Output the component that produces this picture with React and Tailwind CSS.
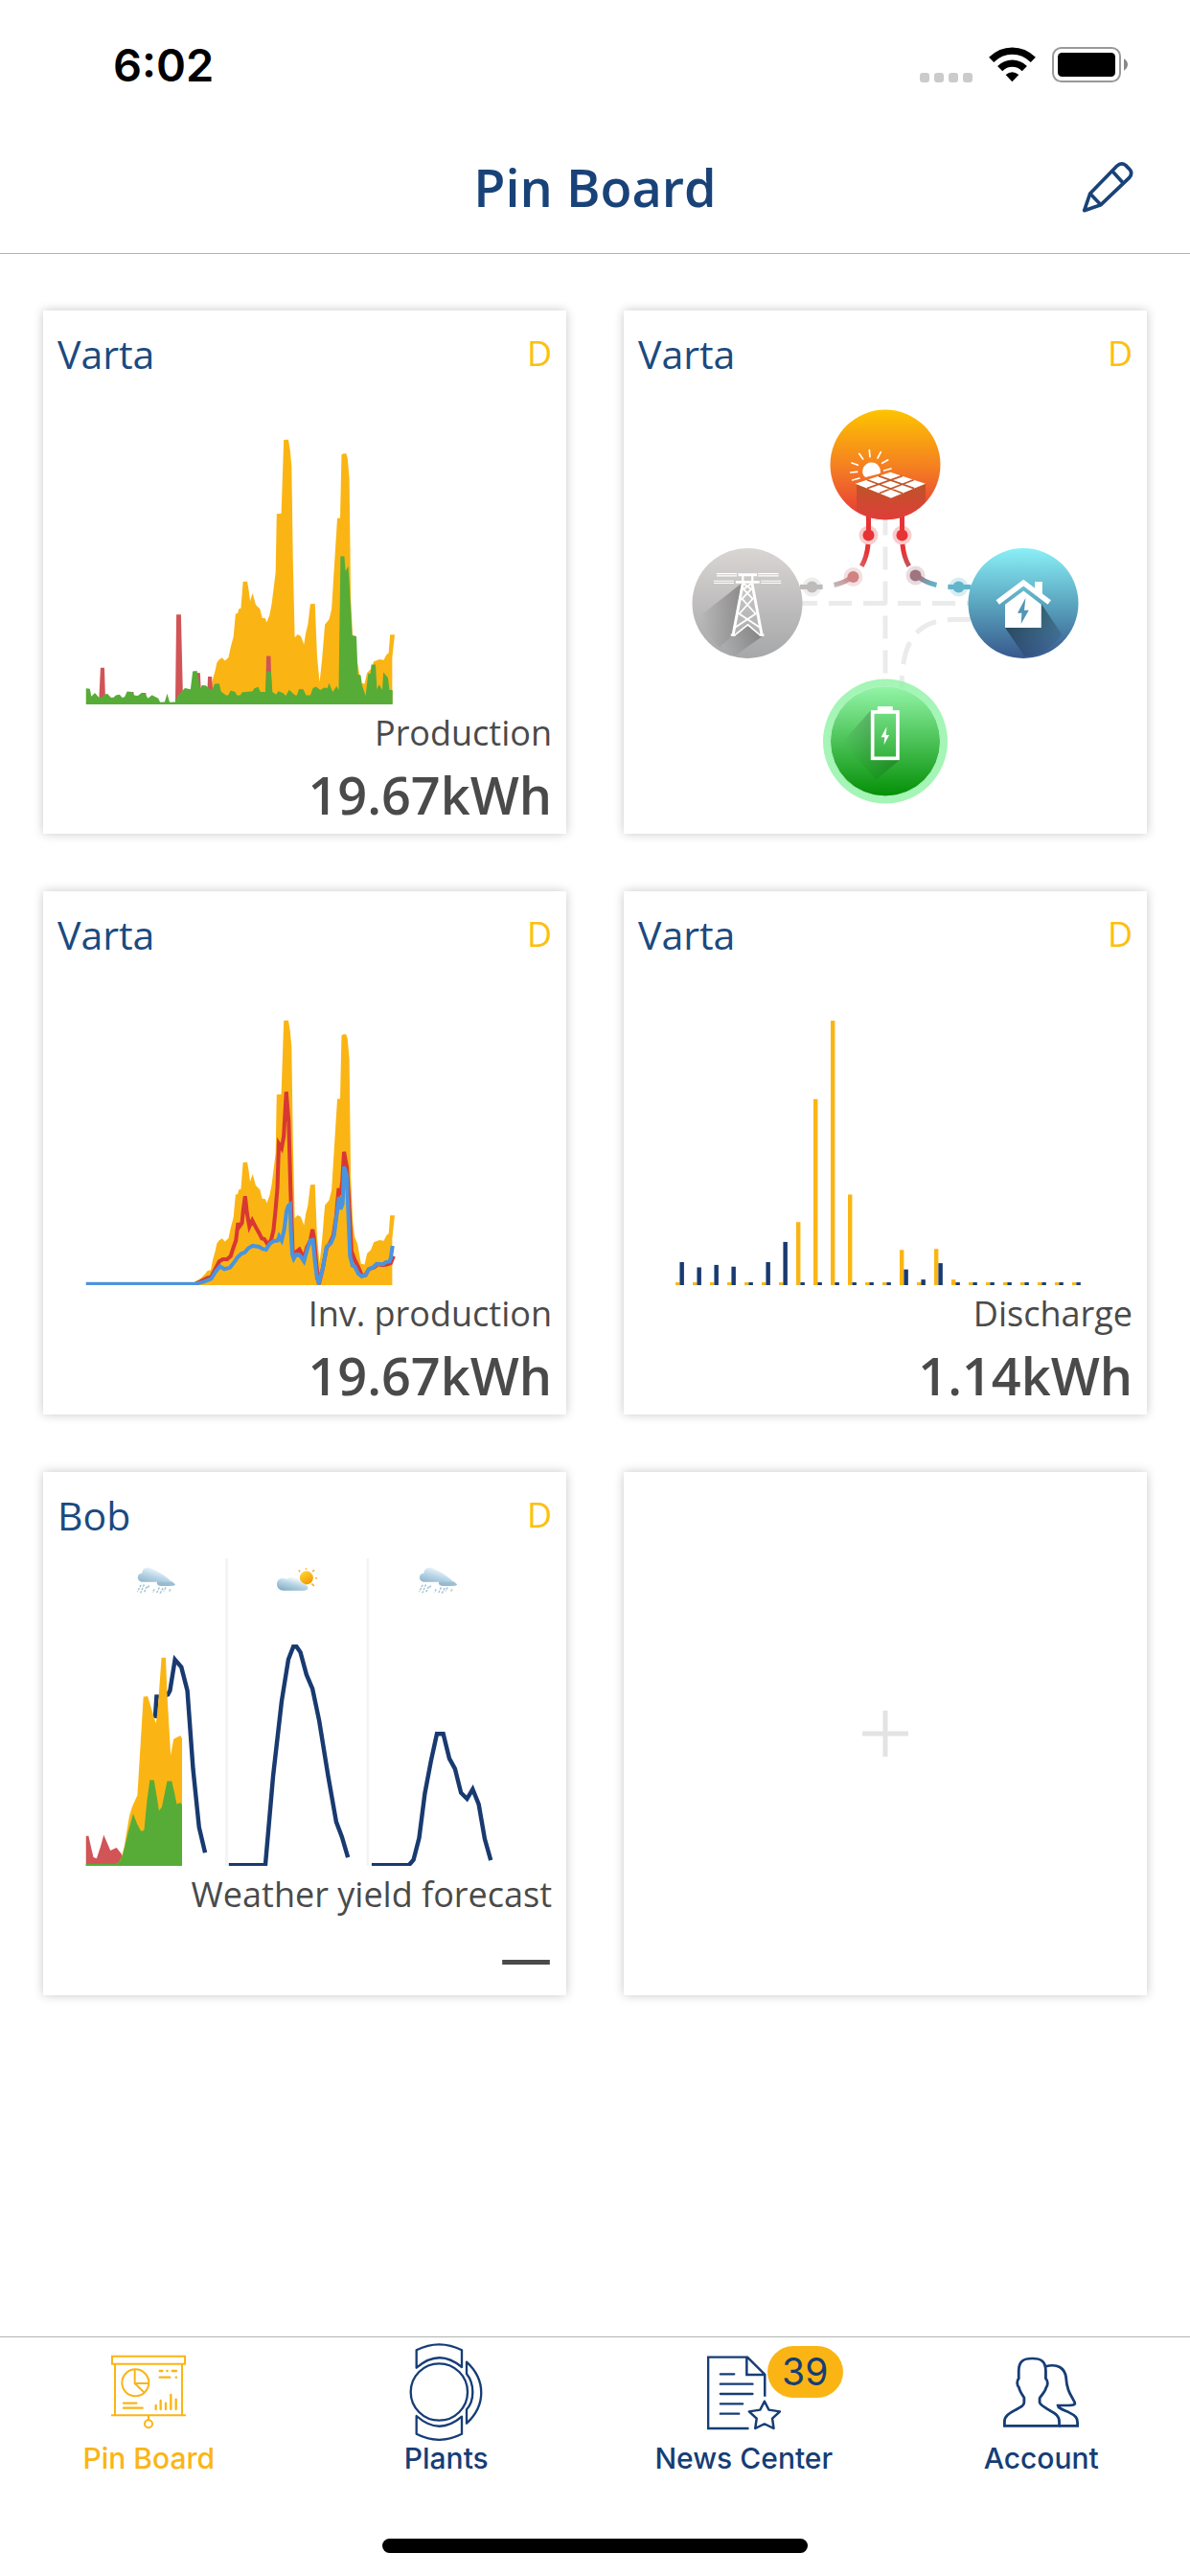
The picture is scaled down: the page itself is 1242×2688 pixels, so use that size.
const produccion = "470,1169 470,1159 485,1150 497,1138 505,1128 514,1126 520,1095 527,1070 531,1050 537,1041 546,1035 554,1044 564,1034 570,1005 578,975 584,909 590,908 593,895 599,893 605,817 617,816 621,840 625,872 632,850 641,883 653,895 659,921 668,922 672,934 680,912 686,880 697,790 700,622 713,621 720,410 733,409 738,440 742,485 746,760 751,977 759,968 768,973 777,997 782,965 788,940 795,881 808,880 814,1030 821,1106 828,1040 836,940 848,925 855,895 862,780 871,635 879,634 883,452 889,449 896,449 900,462 905,520 909,860 915,990 920,1030 928,1050 938,1108 948,1110 955,1078 966,1067 974,1046 990,1040 1002,1042 1010,1026 1016,1021 1020,969 1033,969 1026,1035 1026,1169"

const consumo = "162,1169 162,1123 173,1124 177,1146 187,1136 199,1150 207,1149 214,1140 222,1139 232,1150 240,1149 246,1143 257,1141 264,1150 271,1148 278,1132 292,1133 298,1143 308,1144 320,1135 330,1141 337,1152 348,1142 366,1152 371,1163 384,1162 391,1138 398,1163 414,1162 420,1145 434,1130 441,1122 457,1126 463,1074 475,1073 480,1100 484,1125 489,1114 499,1115 505,1119 513,1127 519,1124 525,1110 538,1109 543,1132 557,1143 563,1143 570,1129 583,1133 588,1143 597,1143 603,1134 632,1131 637,1123 648,1119 654,1133 668,1133 672,1074 684,1074 688,1133 698,1141 705,1131 717,1136 726,1144 735,1127 752,1143 757,1143 763,1125 775,1126 783,1143 795,1143 802,1123 811,1118 823,1128 834,1121 843,1122 848,1108 858,1133 869,1117 875,1128 880,744 891,744 894,786 902,773 905,820 913,970 925,974 929,1083 937,1085 941,1115 951,1144 958,1082 965,1080 967,1055 979,1055 983,1125 989,1112 998,1127 1001,1077 1014,1093 1018,1127 1027,1128 1027,1169"

const inversor1 = "470,1155 485,1148 505,1137 515,1135 525,1115 538,1090 548,1084 560,1084 570,1075 578,1050 585,1030 591,980 595,990 602,980 606,940 611,903 616,950 623,990 631,972 640,990 650,1008 658,1024 665,1026 674,1040 684,1030 691,1000 697,940 702,880 706,752 714,765 720,730 727,603 734,690 739,880 745,1060 752,1065 764,1055 777,1080 785,1050 795,1030 801,998 805,1020 812,1100 819,1155 830,1110 841,1050 850,1038 860,1015 868,960 875,880 880,900 885,860 890,775 898,820 903,900 911,1060 920,1085 930,1105 940,1130 950,1130 960,1112 975,1107 985,1098 1000,1101 1015,1098 1022,1095 1030,1075"

const inversor2 = "162,1155 470,1155 495,1148 515,1140 527,1120 540,1104 552,1112 568,1108 578,1095 590,1078 600,1068 610,1064 620,1052 632,1045 650,1048 660,1054 670,1056 680,1040 690,1032 703,1030 707,1018 714,1030 721,1000 728,945 733,930 738,926 740,1000 744,1070 748,1082 755,1070 765,1072 777,1090 785,1060 795,1030 802,1028 808,1090 814,1140 819,1150 830,1110 841,1048 853,1038 862,1015 870,950 876,905 880,940 886,925 890,818 897,840 900,900 907,1075 914,1102 920,1104 930,1125 940,1133 952,1128 960,1112 972,1107 982,1097 1000,1098 1008,1092 1018,1090 1022,1080 1027,1045"

// altura de cada barra por hora
const cargaHora = [8, 8, 8, 8, 8, 8, 8, 181, 534, 759, 260, 8, 8, 101, 8, 104, 16, 8, 8, 8, 8, 8, 8, 8]
const descargaHora = [66, 51, 58, 53, 8, 66, 124, 8, 8, 8, 8, 8, 8, 45, 16, 63, 8, 8, 8, 8, 8, 8, 8, 8]

const Chart = ({ viewBox, label, children }) => (
    <svg
        viewBox={viewBox}
        preserveAspectRatio="none"
        className="block w-full min-h-0 flex-1"
        role="img"
        aria-label={label}
    >
        {children}
    </svg>
)

const Card = ({ title, label, value, children }) => (
    <article className="flex aspect-square flex-col bg-white shadow-[0_0_10px_rgba(0,0,0,0.22)]">
        <header className="flex h-[90px] shrink-0 items-start justify-between px-[15px] pt-[15px]">
            <h2 className="text-[41px] leading-[60px] text-[#1b4a80]">{title}</h2>
            <span className="text-[36px] leading-[60px] text-[#fcc010]">D</span>
        </header>
        {children}
        {label && (
            <footer className="shrink-0 px-[15px] pt-[4px] pb-[3px] text-right text-[#4a4a4a]">
                <p className="text-[36px] leading-[52px]">{label}</p>
                <p className="text-[54px] leading-[76px] font-semibold">{value}</p>
            </footer>
        )}
    </article>
)

const ProductionChart = () => (
    <Chart viewBox="41 286 1476 883" label="Production">
        <polygon points={produccion} fill="#fab515" />
        <path
            fill="#d15457"
            d="M198 1169L203 1064H214L217 1169ZM290 1169L292 1133H296L300 1169ZM318 1169V1136H331L334 1169ZM414 1169L417 911H430L436 1169ZM475 1169L476 1078L484 1079L488 1169ZM503 1169L506 1089H517L522 1169ZM668 1169L671 1030H683L687 1169ZM222 1139L234 1152H222Z"
        />
        <polygon points={consumo} fill="#57ac37" />
    </Chart>
)

const InverterChart = () => (
    <Chart viewBox="41 286 1476 883" label="Inv. production">
        <polygon points={produccion} fill="#fab515" />
        <g transform="translate(0 11)" fill="none" strokeWidth="11">
            <path d="M162 1150H470" stroke="#d9a39b" strokeWidth="2" />
            <polyline points={inversor1} stroke="#d93832" />
            <polyline points={inversor2} stroke="#4994df" />
        </g>
    </Chart>
)

const DischargeChart = () => (
    <Chart viewBox="30 275 1476 883" label="Discharge">
        {cargaHora.map((h, i) => (
            <g key={i}>
                <rect x={176 + i * 48.65} y={1158 - h} width="12" height={h} fill="#fab515" />
                <rect x={188 + i * 48.65} y={1158 - descargaHora[i]} width="12" height={descargaHora[i]} fill="#183a70" />
            </g>
        ))}
    </Chart>
)

const RainCloud = ({ x }) => (
    <g transform={`translate(${x} 0)`}>
        <path
            d="M16 354C4 353 -2 340 8 331C11 331 13 330 15 329C17 315 29 310 42 316C66 326 84 339 97 352C103 355 108 358 109 362C104 365 96 365 89 365H70C60 365 55 360 58 354Z"
            fill="url(#cloud)"
        />
        <path d="M58 354H100L109 362C104 365 96 365 89 365H68C60 365 56 360 58 354Z" fill="#8fb5cc" opacity=".6" />
        <g stroke="#a9c3d4" strokeWidth="4" strokeDasharray="7 3">
            <path d="M12 362L2 382M21 361L11 385M29 367L21 383M35 364L30 372M50 374L45 384M64 369L56 386M74 371L65 388M82 369L76 380M95 374L91 382" />
        </g>
    </g>
)

const ForecastChart = () => (
    <Chart viewBox="41 287 1476 867" label="Weather yield forecast">
        <defs>
            <linearGradient id="cloud" x1="0.2" y1="1" x2="0.75" y2="0.1">
                <stop offset="0" stopColor="#86acc3" />
                <stop offset="0.55" stopColor="#b9d6e8" />
                <stop offset="1" stopColor="#ffffff" />
            </linearGradient>
            <linearGradient id="sun" x1="0.2" y1="0" x2="0.8" y2="1">
                <stop offset="0" stopColor="#fdd835" />
                <stop offset="1" stopColor="#f39200" />
            </linearGradient>
        </defs>
        <path d="M555 287H563V1154H555ZM953 287H961V1154H953Z" fill="#f4f4f4" />
        <RainCloud x={305} />
        <g>
            <circle cx="784" cy="342" r="19" fill="url(#sun)" />
            <path d="M783 315V319M762 321L766 325M806 320L801 325M809 343H814M799 359L806 365" stroke="#f9a825" strokeWidth="4" />
            <path d="M719 378C696 378 694 345 716 343C723 344 727 345 730 346C734 339 756 336 764 348C771 358 788 362 789 370C786 378 780 378 772 378Z" fill="url(#cloud)" />
        </g>
        <RainCloud x={1100} />
        <g fill="none" stroke="#183a70" strokeWidth="12">
            <polyline points="357,738 361,677 378,677 393,671 399,660 413,573 431,594 448,660 464,880 481,1045 498,1117" />
            <polyline points="565,1152 668,1152 690,900 714,690 733,572 747,536 756,536 767,552 784,615 801,655 820,745 845,900 868,1030 884,1072 901,1130" />
            <polyline points="968,1152 1073,1152 1086,1137 1102,1075 1118,950 1135,860 1152,782 1170,782 1187,851 1203,880 1220,948 1237,965 1253,938 1270,980 1287,1078 1304,1138" />
        </g>
        <polygon fill="#d15457" points="162,1154 162,1070 169,1069 177,1105 183,1130 192,1133 203,1100 212,1067 220,1085 231,1111 248,1103 262,1120 270,1154" />
        <polygon fill="#fab515" points="250,1154 262,1130 270,1100 284,1015 292,988 307,955 324,677 336,676 359,752 364,720 375,567 387,567 391,670 401,842 409,797 428,787 433,795 433,1154" />
        <polygon fill="#57ac37" points="162,1154 162,1148 245,1148 257,1142 266,1120 282,1055 295,1007 306,1035 317,1056 326,1054 334,970 342,912 354,912 362,960 368,999 376,988 391,915 404,915 412,950 418,980 428,976 433,982 433,1154" />
    </Chart>
)

const EnergyFlow = () => (
    <Chart viewBox="0 0 546 456" label="Energy flow">
        <defs>
            <linearGradient id="solar" x1="0" y1="0" x2="0" y2="1">
                <stop offset="0" stopColor="#fdc400" />
                <stop offset="0.5" stopColor="#f58220" />
                <stop offset="1" stopColor="#e7353b" />
            </linearGradient>
            <linearGradient id="grid" x1="0" y1="0" x2="0" y2="1">
                <stop offset="0" stopColor="#d9d5d3" />
                <stop offset="1" stopColor="#a6a7a9" />
            </linearGradient>
            <linearGradient id="home" x1="0" y1="0" x2="0" y2="1">
                <stop offset="0" stopColor="#8af0f7" />
                <stop offset="0.5" stopColor="#5ba6c0" />
                <stop offset="1" stopColor="#37588d" />
            </linearGradient>
            <linearGradient id="battery" x1="0" y1="0" x2="0" y2="1">
                <stop offset="0" stopColor="#93f5a8" />
                <stop offset="1" stopColor="#048f06" />
            </linearGradient>
            <linearGradient id="box" x1="0" y1="0" x2="0" y2="1">
                <stop offset="0" stopColor="#bd5428" />
                <stop offset="1" stopColor="#e23c3a" />
            </linearGradient>
            <linearGradient id="toGrid" gradientUnits="userSpaceOnUse" x1="252" y1="160" x2="220" y2="198">
                <stop offset="0" stopColor="#e73335" />
                <stop offset="0.6" stopColor="#cf8587" />
                <stop offset="1" stopColor="#bfbbbb" />
            </linearGradient>
            <linearGradient id="toHome" gradientUnits="userSpaceOnUse" x1="294" y1="160" x2="322" y2="198">
                <stop offset="0" stopColor="#e73335" />
                <stop offset="0.6" stopColor="#a0757f" />
                <stop offset="1" stopColor="#62b5cb" />
            </linearGradient>
            <linearGradient id="shadeLeft" x1="1" y1="0.2" x2="0.1" y2="0.7">
                <stop offset="0" stopColor="#000" stopOpacity="0.28" />
                <stop offset="1" stopColor="#000" stopOpacity="0" />
            </linearGradient>
            <linearGradient id="shadeBattery" x1="0.9" y1="0.3" x2="0.2" y2="0.75">
                <stop offset="0" stopColor="#000" stopOpacity="0.25" />
                <stop offset="1" stopColor="#000" stopOpacity="0" />
            </linearGradient>
            <linearGradient id="shadeDown" x1="0.2" y1="0.3" x2="0.7" y2="1">
                <stop offset="0" stopColor="#000" stopOpacity="0.45" />
                <stop offset="1" stopColor="#000" stopOpacity="0" />
            </linearGradient>
            <clipPath id="solarClip">
                <circle cx="273" cy="71" r="57" />
            </clipPath>
        </defs>

        {/* lineas sin energia */}
        <g fill="none" stroke="#ebebeb" strokeWidth="5" strokeDasharray="24 12">
            <path d="M273 120.5V310" />
            <path d="M178 215.5H380" />
            <path d="M362 232.5H345C300 232.5 290 262 290 306" />
        </g>
        <g fill="none" strokeWidth="5" strokeDasharray="24 12">
            <path d="M255.5 118V145C255.5 178 240 198.5 200 198.5H184" stroke="url(#toGrid)" />
            <path d="M290.5 118V145C290.5 178 306 198.5 346 198.5H366" stroke="url(#toHome)" />
        </g>

        <circle cx="273" cy="359.5" r="65" fill="#8df2a4" fillOpacity="0.8" />
        <circle cx="273" cy="359.5" r="57.5" fill="url(#battery)" stroke="#b3f5c0" />
        <circle cx="273" cy="71" r="57.5" fill="url(#solar)" />
        <circle cx="129" cy="215.5" r="57.5" fill="url(#grid)" />
        <circle cx="417" cy="215.5" r="57.5" fill="url(#home)" />

        <g stroke="none">
            <circle cx="255.5" cy="144.5" r="10" fill="#e73335" opacity="0.25" />
            <circle cx="255.5" cy="144.5" r="6" fill="#e73335" />
            <circle cx="290.5" cy="144.5" r="10" fill="#e73335" opacity="0.25" />
            <circle cx="290.5" cy="144.5" r="6" fill="#e73335" />
            <circle cx="239.5" cy="188" r="10" fill="#d18284" opacity="0.25" />
            <circle cx="239.5" cy="188" r="6" fill="#d18284" />
            <circle cx="304.5" cy="186.5" r="10" fill="#a0757f" opacity="0.25" />
            <circle cx="304.5" cy="186.5" r="6" fill="#a0757f" />
            <circle cx="196.5" cy="198.5" r="10" fill="#bfbbbb" opacity="0.25" />
            <circle cx="196.5" cy="198.5" r="6" fill="#bfbbbb" />
            <circle cx="349.5" cy="198.5" r="10" fill="#62b5cb" opacity="0.25" />
            <circle cx="349.5" cy="198.5" r="6" fill="#62b5cb" />
        </g>

        {/* panel solar */}
        <g clipPath="url(#solarClip)">
            <g transform="translate(209 6) scale(0.3333)">
                <path d="M102 254L210 298L318 254V375H102Z" fill="url(#box)" />
                <path d="M122 224A28 28 0 1 1 176 222L131 234Q124 231 122 224Z" fill="#fff" />
                <path
                    d="M142 149L144 170M110 160L122 177M178 155L168 174M87 189L106 196M200 180L182 190M83 219L104 217M89 243L111 237M210 207L188 213"
                    stroke="#fff"
                    strokeWidth="5"
                    strokeLinecap="round"
                />
                <path d="M98 254L208 218L318 254L210 299Z" fill="#fff" />
                <path d="M135 269L245 230M173 284L281 242M135 242L246 284M171 230L282 269" stroke="#c4582b" strokeWidth="5" />
            </g>
        </g>

        <g transform="scale(0.3699 0.3635) translate(-30 -286)">
            {/* torre */}
            <path d="M362 822L245 915Q258 965 300 1005L340 970Z" fill="url(#shadeLeft)" />
            <path d="M379 935L337 973L298 1007Q315 1023 342 1031L422 973Z" fill="url(#shadeLeft)" />
            <g fill="none" stroke="#fff">
                <path d="M292 794H349M292 800H349M409 794H467M409 800H467M284 815H341M284 821H341M417 815H474M417 821H474" strokeWidth="3" />
                <path d="M353 797H406M346 818H413" strokeWidth="8" />
                <path d="M366 800V818M393 800V818" strokeWidth="6" />
                <path d="M366 822L338 972M392 822L420 972" strokeWidth="8" />
                <path d="M367 822L390 838L364 866L402 909L344 948M391 822L368 838L394 866L356 909L414 948M346 968L380 940L412 968M364 866L356 870" strokeWidth="5" />
            </g>
            <path d="M332 967H348L345 973H332ZM410 967H426V973H413Z" fill="#fff" />

            {/* casa */}
            <path d="M1208 880L1266 968Q1228 1025 1162 1032L1106 949H1208Z" fill="url(#shadeDown)" />
            <path d="M1085 876L1158 820L1231 876" fill="none" stroke="#fff" strokeWidth="15" />
            <path d="M1190 817H1211V862L1190 845Z" fill="#fff" />
            <path d="M1106 882L1158 843L1208 882V949H1106Z" fill="#fff" />
            <path d="M1164 863L1141 907H1153L1151 938L1173 899H1160Z" fill="#5197b5" />

            {/* bateria */}
            <path d="M727 1186L645 1280L742 1385L808 1329H727Z" fill="url(#shadeBattery)" />
            <rect x="732" y="1191" width="71" height="133" fill="none" stroke="#fff" strokeWidth="10" />
            <path d="M746 1175H789V1188H746Z" fill="#fff" />
            <path d="M772 1233L756 1263H766L764 1285L779 1257H770Z" fill="#fff" />
        </g>
    </Chart>
)

const PinBoardIcon = () => (
    <svg viewBox="168 73 234 306" className="h-[102px] w-[78px]" fill="none" stroke="currentColor" strokeWidth="6">
        <path d="M171 114H399V138H171ZM180 138V299M390 138V299M285 299V313" />
        <path d="M170 299H400" strokeLinecap="round" />
        <circle cx="285" cy="326" r="12" />
        <circle cx="244" cy="197" r="42" />
        <path d="M242 156V199H286M242 199L272 228" />
        <path
            strokeWidth="7"
            strokeLinecap="round"
            d="M320 160H328M343 160H344M359 160H372M320 180H352M371 180H372M207 261H247M207 276H266M308 268V280M323 253V280M339 261V280M355 235V280M371 249V280"
        />
    </svg>
)

const PlantsIcon = () => (
    <svg viewBox="1104 75 231 306" className="h-[102px] w-[77px]" fill="none" stroke="currentColor" strokeWidth="7" strokeLinejoin="round">
        <circle cx="1198" cy="228" r="89" />
        <path d="M1127 97Q1198 61 1269 97V150Q1198 90 1127 152Z" />
        <path d="M1127 359Q1198 396 1269 359V305Q1198 366 1127 303Z" />
        <path d="M1284 134C1345 190 1345 270 1284 326V283Q1303 262 1303 228Q1303 195 1284 171Z" />
    </svg>
)

const NewsIcon = () => (
    <svg viewBox="274 73 216 306" preserveAspectRatio="none" className="h-[102px] w-[77px]" fill="none" stroke="currentColor" strokeWidth="7">
        <path d="M396 340H277V117H392L443 171V240M390 117V172H443" />
        <path d="M313 170H353M313 201H407M313 232H407M313 263H378M313 294H367" strokeLinecap="round" />
        <path d="M442 255L455 282L487 287L465 309L469 340L442 326L415 340L419 309L397 287L429 282Z" strokeLinejoin="round" />
    </svg>
)

const AccountIcon = () => (
    <svg viewBox="1140 73 224 306" preserveAspectRatio="none" className="h-[102px] w-[79px]" fill="none" stroke="currentColor" strokeWidth="8">
        <path d="M1144 332V318C1144 300 1160 292 1180 280C1195 272 1202 268 1202 258V244C1195 232 1188 222 1187 212C1180 205 1180 190 1186 184V160C1186 130 1200 121 1226 121C1252 121 1266 130 1266 160V184C1273 190 1273 205 1267 212C1265 225 1256 232 1248 245V258C1250 268 1262 272 1275 282C1295 294 1306 300 1306 320V332Z" />
        <path d="M1266 146C1300 136 1322 150 1326 180C1328 220 1340 235 1350 255C1356 266 1350 268 1330 268H1302C1303 278 1318 282 1335 290C1355 300 1360 308 1360 322V332H1306" />
    </svg>
)

const tabs = [
    { name: "Pin Board", Icon: PinBoardIcon, active: true },
    { name: "Plants", Icon: PlantsIcon },
    { name: "News Center", Icon: NewsIcon, badge: 39 },
    { name: "Account", Icon: AccountIcon },
]

const StatusBar = () => (
    <div className="flex h-[135px] items-center justify-between pr-[65px] pl-[118px]">
        <time className="font-['Inter',sans-serif] text-[47px] leading-[48px] font-semibold text-black">6:02</time>
        <div className="flex items-end gap-[17px]">
            <div className="flex gap-[5px]">
                <span className="size-[10px] rounded-[3px] bg-[#cbcbcb]" />
                <span className="size-[10px] rounded-[3px] bg-[#cbcbcb]" />
                <span className="size-[10px] rounded-[3px] bg-[#cbcbcb]" />
                <span className="size-[10px] rounded-[3px] bg-[#cbcbcb]" />
            </div>
            <svg viewBox="276 26 147 111" className="h-[37px] w-[49px]">
                <g fill="none" stroke="#000" strokeWidth="22">
                    <path d="M284 66C322 29 377 29 415 66" />
                    <path d="M311 94C333 72 366 72 388 94" />
                </g>
                <path d="M329 113Q349 96 370 113L349 135Z" />
            </svg>
            <svg viewBox="474 27 237 111" className="h-[37px] w-[79px]">
                <rect x="477" y="30" width="210" height="105" rx="26" fill="none" stroke="#999" strokeWidth="6" />
                <rect x="492" y="45" width="180" height="75" rx="13" />
                <path d="M699 64Q711 71 711 82T699 101Z" fill="#888" />
            </svg>
        </div>
    </div>
)

const App = () => {
    return (
        <div className="flex min-h-screen flex-col bg-white font-['Open_Sans',sans-serif]">
            <StatusBar />
            <header className="grid h-[130px] grid-cols-[1fr_auto_1fr] items-center border-b border-[#b2b2b2] pb-[9px]">
                <h1 className="col-start-2 text-[54px] leading-[72px] font-semibold text-[#194378]">Pin Board</h1>
                <button type="button" aria-label="Edit" className="mr-[59px] cursor-pointer justify-self-end text-[#194378]">
                    <svg viewBox="565 387 162 162" className="size-[54px]" fill="none" stroke="currentColor" strokeWidth="11" strokeLinejoin="round">
                        <path d="M573 542L591 489L675 403Q689 389 703 401L714 412Q726 425 714 439L625 524Z" />
                        <path d="M591 489L625 524M660 418L694 455" />
                    </svg>
                </button>
            </header>

            <main className="flex-1 px-[45px] pt-[59px] pb-[60px]">
                <div className="grid grid-cols-2 gap-[60px]">
                    <Card title="Varta" label="Production" value="19.67kWh">
                        <ProductionChart />
                    </Card>
                    <Card title="Varta">
                        <EnergyFlow />
                    </Card>
                    <Card title="Varta" label="Inv. production" value="19.67kWh">
                        <InverterChart />
                    </Card>
                    <Card title="Varta" label="Discharge" value="1.14kWh">
                        <DischargeChart />
                    </Card>
                    <Card title="Bob" label="Weather yield forecast" value="—">
                        <ForecastChart />
                    </Card>
                    <button
                        type="button"
                        aria-label="Add"
                        className="flex aspect-square cursor-pointer items-center justify-center bg-white shadow-[0_0_10px_rgba(0,0,0,0.22)]"
                    >
                        <svg viewBox="0 0 48 48" className="size-[48px]" stroke="#e3e3e3" strokeWidth="5">
                            <path d="M24 0V48M0 24H48" />
                        </svg>
                    </button>
                </div>
            </main>

            <footer className="border-t border-[#b2b2b2]">
                <nav className="grid grid-cols-4 pt-[6px]">
                    {tabs.map(({ name, Icon, active, badge }) => (
                        <a
                            key={name}
                            href="#"
                            className={`flex flex-col items-center ${active ? "text-[#fab515]" : "text-[#163d75]"}`}
                        >
                            <span className="relative">
                                <Icon />
                                {badge && (
                                    <span className="absolute top-[3px] left-[63px] flex h-[54px] w-[79px] items-center justify-center rounded-full bg-[#fab515] font-['Inter',sans-serif] text-[39px] leading-[54px]">
                                        {badge}
                                    </span>
                                )}
                            </span>
                            <span className="font-['Inter',sans-serif] text-[30px] leading-[36px] font-medium">{name}</span>
                        </a>
                    ))}
                </nav>
                <div className="mx-auto mt-[66px] mb-[24px] h-[15px] w-[444px] rounded-full bg-black" />
            </footer>
        </div>
    )
}

export default App
